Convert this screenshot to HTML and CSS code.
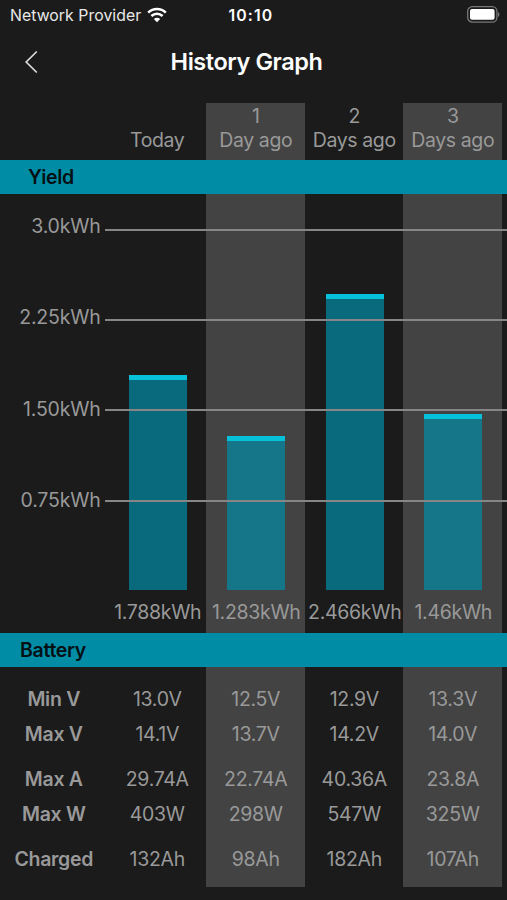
FILE: index.html
```
<!DOCTYPE html>
<html lang="en">
<head>
    <meta charset="UTF-8">
    <meta name="viewport" content="width=device-width, initial-scale=1.0">
    <title>History Graph</title>
    <link rel="stylesheet" href="styles.css">
</head>
<body>
    <div class="status-bar">
        <div class="carrier">
            <span>Network Provider</span>
            <svg class="wifi" width="20" height="16" viewBox="0 0 20 16">
                <path d="M1.2 5.6 C6.2 0.7 13.8 0.7 18.8 5.6" />
                <path d="M4.4 9 C7.6 6 12.4 6 15.6 9" />
                <path class="wifi-dot" d="M6.8 12 C8.6 10.4 11.4 10.4 13.2 12 L10 15.2 Z" />
            </svg>
        </div>
        <div class="time">10:10</div>
        <svg class="battery" width="33" height="17" viewBox="0 0 33 17">
            <rect class="battery-case" x="0.7" y="0.7" width="29.2" height="15.4" rx="4.6" />
            <rect class="battery-level" x="3" y="3" width="24.6" height="10.8" rx="2" />
            <path class="battery-tip" d="M31 6 C32.9 6.8 32.9 10 31 10.8 Z" />
        </svg>
    </div>
    <header class="nav">
        <svg class="back" width="14" height="24" viewBox="0 0 14 24">
            <path d="M12.8 1.5 L2.2 12 L12.8 22.5" />
        </svg>
        <h1>History Graph</h1>
    </header>
    <main>
        <div class="row days">
            <div class="label"></div>
            <div class="cell">Today</div>
            <div class="cell shade">1<br>Day ago</div>
            <div class="cell">2<br>Days ago</div>
            <div class="cell shade">3<br>Days ago</div>
        </div>
        <h2 class="band yield">Yield</h2>
        <div class="chart">
            <div class="row plot">
                <div class="scale">
                    <span>3.0kWh</span>
                    <span>2.25kWh</span>
                    <span>1.50kWh</span>
                    <span>0.75kWh</span>
                </div>
                <div class="cell"><div class="bar" style="height: 215px"></div><span>1.788kWh</span></div>
                <div class="cell shade"><div class="bar" style="height: 154.5px"></div><span>1.283kWh</span></div>
                <div class="cell"><div class="bar" style="height: 296.5px"></div><span>2.466kWh</span></div>
                <div class="cell shade"><div class="bar" style="height: 176px"></div><span>1.46kWh</span></div>
            </div>
            <div class="lines">
                <i></i>
                <i></i>
                <i></i>
                <i></i>
            </div>
        </div>
        <h2 class="band">Battery</h2>
        <div class="row table first">
            <div class="label">Min V</div>
            <div class="cell">13.0V</div>
            <div class="cell shade">12.5V</div>
            <div class="cell">12.9V</div>
            <div class="cell shade">13.3V</div>
        </div>
        <div class="row table">
            <div class="label">Max V</div>
            <div class="cell">14.1V</div>
            <div class="cell shade">13.7V</div>
            <div class="cell">14.2V</div>
            <div class="cell shade">14.0V</div>
        </div>
        <div class="row table spaced">
            <div class="label">Max A</div>
            <div class="cell">29.74A</div>
            <div class="cell shade">22.74A</div>
            <div class="cell">40.36A</div>
            <div class="cell shade">23.8A</div>
        </div>
        <div class="row table">
            <div class="label">Max W</div>
            <div class="cell">403W</div>
            <div class="cell shade">298W</div>
            <div class="cell">547W</div>
            <div class="cell shade">325W</div>
        </div>
        <div class="row table spaced last">
            <div class="label">Charged</div>
            <div class="cell">132Ah</div>
            <div class="cell shade">98Ah</div>
            <div class="cell">182Ah</div>
            <div class="cell shade">107Ah</div>
        </div>
    </main>
</body>
</html>
```
FILE: styles.css
```
* {
    box-sizing: border-box;
}
body {
    margin: 0;
    height: 900px;
    overflow: hidden;
    background-color: #1b1b1b;
    color: #999;
    font-family: Inter, "Liberation Sans", sans-serif;
    font-size: 19.5px;
    letter-spacing: -0.3px;
}
.status-bar {
    display: grid;
    grid-template-columns: 218.5px auto 1fr;
    align-items: center;
    height: 30px;
    padding: 0 7px 0 10px;
    color: #e8e8e8;
    font-size: 15.8px;
    letter-spacing: 0.05px;
}
.carrier {
    display: flex;
    align-items: center;
    gap: 6px;
    white-space: nowrap;
}
.wifi {
    fill: none;
    stroke: #fff;
    stroke-width: 2.6;
}
.wifi .wifi-dot {
    fill: #fff;
    stroke: none;
}
.time {
    color: #fff;
    font-weight: 600;
    letter-spacing: 1.1px;
}
.battery {
    justify-self: end;
    margin-top: -2px;
}
.battery-case {
    fill: none;
    stroke: #777;
    stroke-width: 1.3;
}
.battery-level {
    fill: #fff;
}
.battery-tip {
    fill: #777;
}
.nav {
    display: grid;
    grid-template-columns: 60px 1fr 74px;
    align-items: center;
    height: 64px;
}
.back {
    margin-left: 24px;
    fill: none;
    stroke: #ddd;
    stroke-width: 1.7;
}
h1 {
    margin: -2px 0 0;
    color: #fff;
    font-size: 23.5px;
    font-weight: 600;
    letter-spacing: -0.45px;
    text-align: center;
}
main {
    padding-top: 9px;
}
.row {
    display: grid;
    grid-template-columns: 107.5px repeat(4, 98.5px);
}
.label {
    font-weight: 600;
    text-align: center;
}
.cell {
    padding-left: 1px;
    text-align: center;
    white-space: nowrap;
}
.shade {
    background-color: #434343;
}
.days {
    height: 57px;
    line-height: 24px;
}
.days .cell {
    display: flex;
    flex-direction: column;
    justify-content: flex-end;
    padding-bottom: 8px;
    letter-spacing: -0.4px;
}
.band {
    margin: 0;
    height: 34px;
    padding-left: 20px;
    background-color: #008ca5;
    color: #041014;
    font-size: 19.5px;
    font-weight: 600;
    line-height: 34px;
}
.yield {
    padding-left: 28px;
}
.chart {
    display: grid;
    height: 439px;
}
.plot,
.lines {
    grid-area: 1 / 1;
}
.plot .cell {
    display: flex;
    flex-direction: column;
    align-items: center;
    justify-content: flex-end;
    padding-left: 2px;
}
.plot .cell span {
    height: 43px;
    line-height: 45px;
}
.bar {
    width: 58px;
    background-color: rgba(0, 140, 165, 0.7);
    background-clip: padding-box;
    border-top: 5.5px solid #06c1d9;
}
.scale {
    display: flex;
    flex-direction: column;
    gap: 67.3px;
    padding: 20px 7px 0 0;
    line-height: 24px;
    text-align: right;
    letter-spacing: -0.2px;
}
/* grid lines run across the bars, out to the screen edge */
.lines {
    display: flex;
    flex-direction: column;
    gap: 88.4px;
    margin: 34.5px 0 0 105px;
    z-index: 1;
}
.lines i {
    height: 2px;
    background-color: #868686;
}
.table .label,
.table .cell {
    height: 35px;
    line-height: 35px;
}
.first .label,
.first .cell {
    height: 50px;
    padding-top: 15px;
}
.spaced .label,
.spaced .cell {
    height: 45px;
    padding-top: 10px;
}
.last .cell,
.last .label {
    height: 55px;
}
```
